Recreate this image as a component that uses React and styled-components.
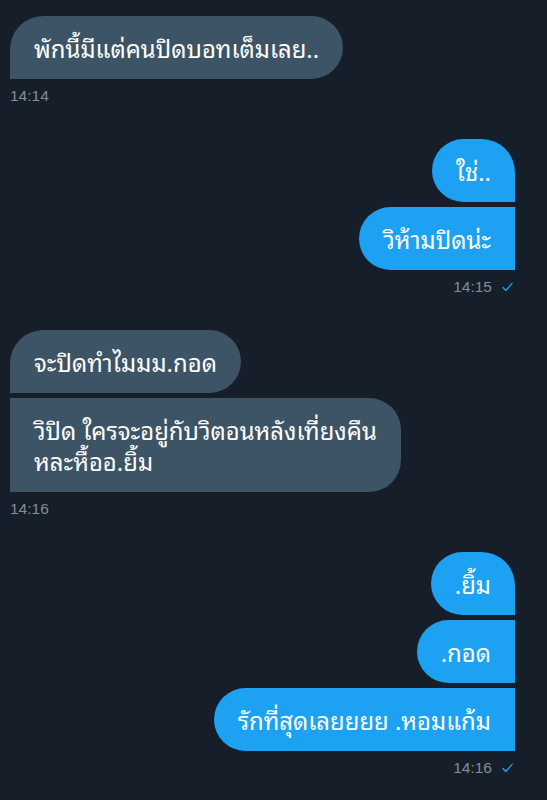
import React from 'react';
import styled, { createGlobalStyle } from 'styled-components';

const groups = [
  { mine: false, time: '14:14', messages: ['พักนี้มีแต่คนปิดบอทเต็มเลย..'] },
  { mine: true, time: '14:15', messages: ['ใช่..', 'วิห้ามปิดน่ะ'] },
  {
    mine: false,
    time: '14:16',
    messages: ['จะปิดทำไมมม.กอด', ['วิปิด ใครจะอยู่กับวิตอนหลังเที่ยงคืน', 'หละหื้ออ.ยิ้ม']],
  },
  { mine: true, time: '14:16', messages: ['.ยิ้ม', '.กอด', 'รักที่สุดเลยยยย .หอมแก้ม'] },
];

const App = () => {
  return (
    <>
      <GlobalStyle />
      <Thread>
        {groups.map((group, i) => (
          <Group key={i} $mine={group.mine}>
            {group.messages.map((msg, j) => (
              <Bubble key={j} $mine={group.mine} $first={j === 0}>
                {Array.isArray(msg)
                  ? msg.map((line, k) => (
                      <React.Fragment key={k}>
                        {k > 0 && <br />}
                        {line}
                      </React.Fragment>
                    ))
                  : msg}
              </Bubble>
            ))}
            <Meta>
              {group.time}
              {group.mine && (
                <Check viewBox="0 0 12 10">
                  <polyline points="1,5.5 4.2,8.8 11,1" />
                </Check>
              )}
            </Meta>
          </Group>
        ))}
      </Thread>
    </>
  );
};

const GlobalStyle = createGlobalStyle`
  html, body {
    margin: 0;
    background: #161f29;
  }
`;

const Thread = styled.main`
  display: flex;
  flex-direction: column;
  gap: 34px;
  padding: 16px 32px 0 10px;
  min-height: 800px;
  box-sizing: border-box;
  background: #161f29;
`;

const Group = styled.section`
  display: flex;
  flex-direction: column;
  align-items: ${(p) => (p.$mine ? 'flex-end' : 'flex-start')};
  gap: 5px;
`;

const Bubble = styled.div`
  box-sizing: border-box;
  padding: 16px 24px;
  font-family: 'Noto Sans Thai Looped', 'Noto Sans Thai', 'Noto Sans', 'DejaVu Sans', sans-serif;
  font-size: 23.9px;
  line-height: 31px;
  color: #ffffff;
  background: ${(p) => (p.$mine ? '#1da1f2' : '#3d5466')};
  border-radius: ${(p) =>
    p.$mine
      ? `32px ${p.$first ? '34px' : '0'} 0 32px`
      : `${p.$first ? '34px' : '0'} 32px 32px 0`};
  white-space: nowrap;
`;

const Meta = styled.div`
  display: flex;
  align-items: center;
  gap: 10px;
  margin-top: 3px;
  margin-right: 2px;
  font-family: 'Liberation Sans', Arial, sans-serif;
  font-size: 15.5px;
  line-height: 18px;
  color: #7f8e9b;
`;

const Check = styled.svg`
  width: 11px;
  height: 10px;
  fill: none;
  stroke: #1da1f2;
  stroke-width: 1.4;
  stroke-linecap: round;
  stroke-linejoin: round;
`;

export default App;
